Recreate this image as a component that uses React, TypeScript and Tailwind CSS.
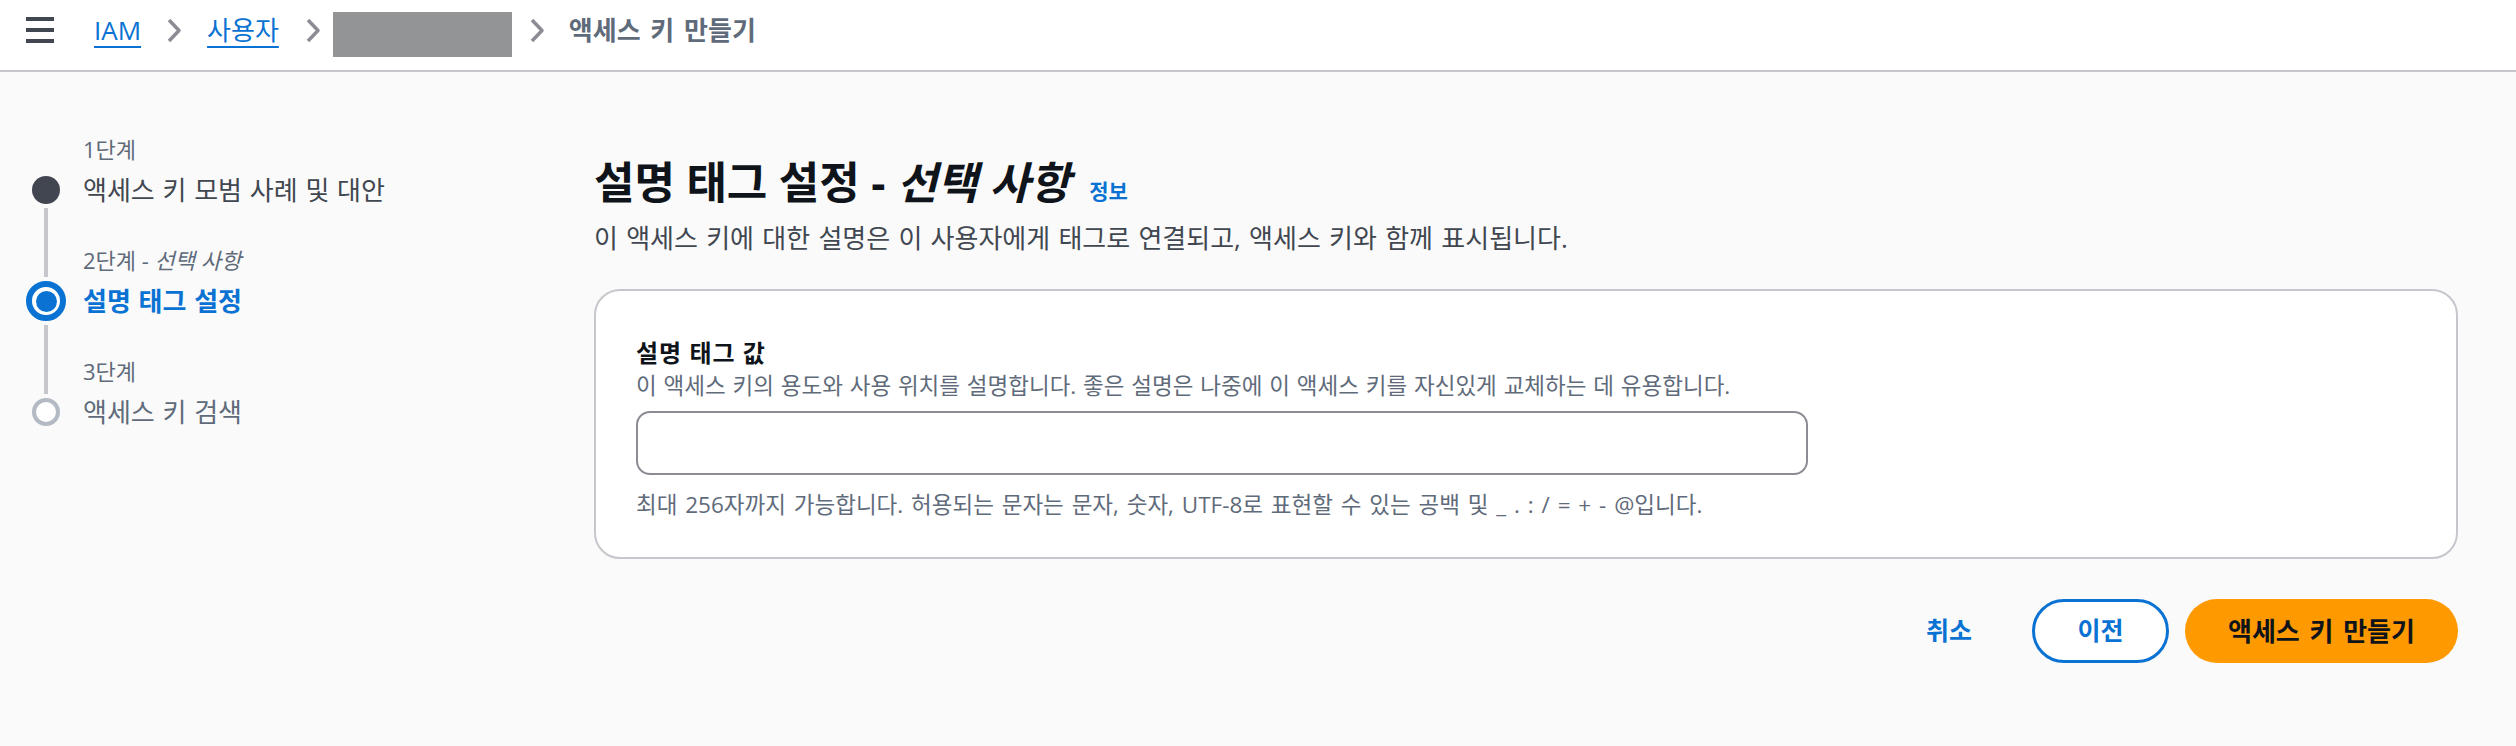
import React from 'react';

function Chevron() {
  return (
    <svg width="16" height="25" viewBox="0 0 16 25" className="shrink-0">
      <polyline
        points="3,2 13,12.5 3,23"
        fill="none"
        stroke="#8c8c94"
        strokeWidth="3.5"
        strokeLinejoin="round"
      />
    </svg>
  );
}

function Line({ show }: { show: boolean }) {
  return <div className={`w-[4px] flex-1 ${show ? 'bg-[#c6c6cd]' : 'bg-transparent'}`} />;
}

type Step = {
  label: React.ReactNode;
  title: string;
  state: 'done' | 'active' | 'todo';
};

const steps: Step[] = [
  { label: '1단계', title: '액세스 키 모범 사례 및 대안', state: 'done' },
  {
    label: (
      <>
        2단계 - <span className="italic">선택 사항</span>
      </>
    ),
    title: '설명 태그 설정',
    state: 'active',
  },
  { label: '3단계', title: '액세스 키 검색', state: 'todo' },
];

function Dot({ state }: { state: Step['state'] }) {
  if (state === 'done') return <div className="w-[28px] h-[28px] rounded-full bg-[#424650] shrink-0" />;
  if (state === 'active')
    return (
      <div className="w-[40px] h-[40px] rounded-full border-[6px] border-[#0972d3] bg-white flex items-center justify-center shrink-0">
        <div className="w-[21px] h-[21px] rounded-full bg-[#0972d3]" />
      </div>
    );
  return <div className="w-[28px] h-[28px] rounded-full border-[4px] border-[#b4bac4] bg-white shrink-0" />;
}

function Steps() {
  return (
    <nav className="w-[594px] shrink-0 pt-[62px] pl-[26px]">
      {steps.map((s, i) => {
        const first = i === 0;
        const last = i === steps.length - 1;
        return (
          <div key={i} className="flex flex-col">
            <div className="flex h-[30px]">
              <div className="w-[40px] flex flex-col items-center">
                <Line show={!first} />
              </div>
              <div className="ml-[17px] text-[22px] leading-[30px] text-[#5f6b7a]">{s.label}</div>
            </div>
            <div className="flex h-[52px]">
              <div className="w-[40px] flex flex-col items-center">
                <Line show={!first} />
                <div className="my-[4px]">
                  <Dot state={s.state} />
                </div>
                <Line show={!last} />
              </div>
              <div
                className={`ml-[17px] flex items-center text-[26px] [word-spacing:1px] ${
                  s.state === 'active'
                    ? 'text-[#0972d3] font-bold'
                    : s.state === 'done'
                    ? 'text-[#414750]'
                    : 'text-[#5f6b7a]'
                }`}
              >
                {s.title}
              </div>
            </div>
            {!last && (
              <div className="flex h-[29px]">
                <div className="w-[40px] flex flex-col items-center">
                  <Line show />
                </div>
              </div>
            )}
          </div>
        );
      })}
    </nav>
  );
}

export default function App() {
  return (
    <div className="w-full min-h-[746px] bg-[#fafafa] font-[family-name:'Open_Sans','Noto_Sans_CJK_KR',sans-serif]">
      <header className="h-[72px] bg-white border-b-2 border-[#c6c6cd] flex items-start pl-[26px]">
        <div className="h-[60px] flex items-center">
          <div className="w-[28px] flex flex-col gap-[7px]">
            <div className="h-[4px] bg-[#414750]" />
            <div className="h-[4px] bg-[#414750]" />
            <div className="h-[4px] bg-[#414750]" />
          </div>
          <a className="ml-[40px] text-[26px] leading-[34px] text-[#0972d3] underline decoration-2 underline-offset-[6px]">
            IAM
          </a>
          <div className="ml-[25px]">
            <Chevron />
          </div>
          <a className="ml-[25px] text-[26px] leading-[34px] text-[#0972d3] underline decoration-2 underline-offset-[6px]">
            사용자
          </a>
          <div className="ml-[26px]">
            <Chevron />
          </div>
        </div>
        <div className="ml-[12px] mt-[12px] w-[179px] h-[45px] bg-[#939496]" />
        <div className="h-[60px] flex items-center">
          <div className="ml-[17px]">
            <Chevron />
          </div>
          <span className="ml-[24px] text-[26px] leading-[34px] font-bold text-[#5f6b7a] [word-spacing:3px]">
            액세스 키 만들기
          </span>
        </div>
      </header>

      <div className="flex">
        <Steps />

        <main className="flex-1 pt-[83px] pr-[58px]">
          <div className="flex items-baseline">
            <h1 className="text-[44px] leading-[54px] font-bold text-[#0f141a]">
              설명 태그 설정 - <span className="italic">선택 사항</span>
            </h1>
            <a className="ml-[19px] text-[21px] font-bold text-[#0972d3]">정보</a>
          </div>
          <p className="mt-[13px] text-[26px] leading-[32px] text-[#414750] [word-spacing:1.5px]">
            이 액세스 키에 대한 설명은 이 사용자에게 태그로 연결되고, 액세스 키와 함께 표시됩니다.
          </p>

          <section className="mt-[35px] bg-white border-2 border-[#c6c6cd] rounded-[26px] pt-[47px] pb-[37px] px-[40px]">
            <label className="block text-[24px] leading-[30px] font-bold text-[#0f141a] tracking-[1px]">
              설명 태그 값
            </label>
            <p className="mt-[3px] text-[22.5px] leading-[30px] text-[#5f6b7a] [word-spacing:1px]">
              이 액세스 키의 용도와 사용 위치를 설명합니다. 좋은 설명은 나중에 이 액세스 키를 자신있게 교체하는 데 유용합니다.
            </p>
            <input
              type="text"
              className="mt-[10px] block w-[1172px] h-[64px] bg-white border-2 border-[#8c8c94] rounded-[14px] outline-none px-[16px] text-[22px]"
            />
            <p className="mt-[15px] text-[22.5px] leading-[30px] text-[#5f6b7a] [word-spacing:2px]">
              최대 256자까지 가능합니다. 허용되는 문자는 문자, 숫자, UTF-8로 표현할 수 있는 공백 및 _ . : / = + - @입니다.
            </p>
          </section>

          <div className="mt-[40px] flex items-center justify-end">
            <button className="text-[25px] font-bold text-[#0972d3]">취소</button>
            <button className="ml-[60px] w-[137px] h-[64px] rounded-full border-[3px] border-[#0972d3] bg-white text-[25px] font-bold text-[#0972d3]">
              이전
            </button>
            <button className="ml-[16px] w-[273px] h-[64px] rounded-full bg-[#ff9900] text-[26px] font-bold text-[#0f141a] [word-spacing:3px]">
              액세스 키 만들기
            </button>
          </div>
        </main>
      </div>
    </div>
  );
}
